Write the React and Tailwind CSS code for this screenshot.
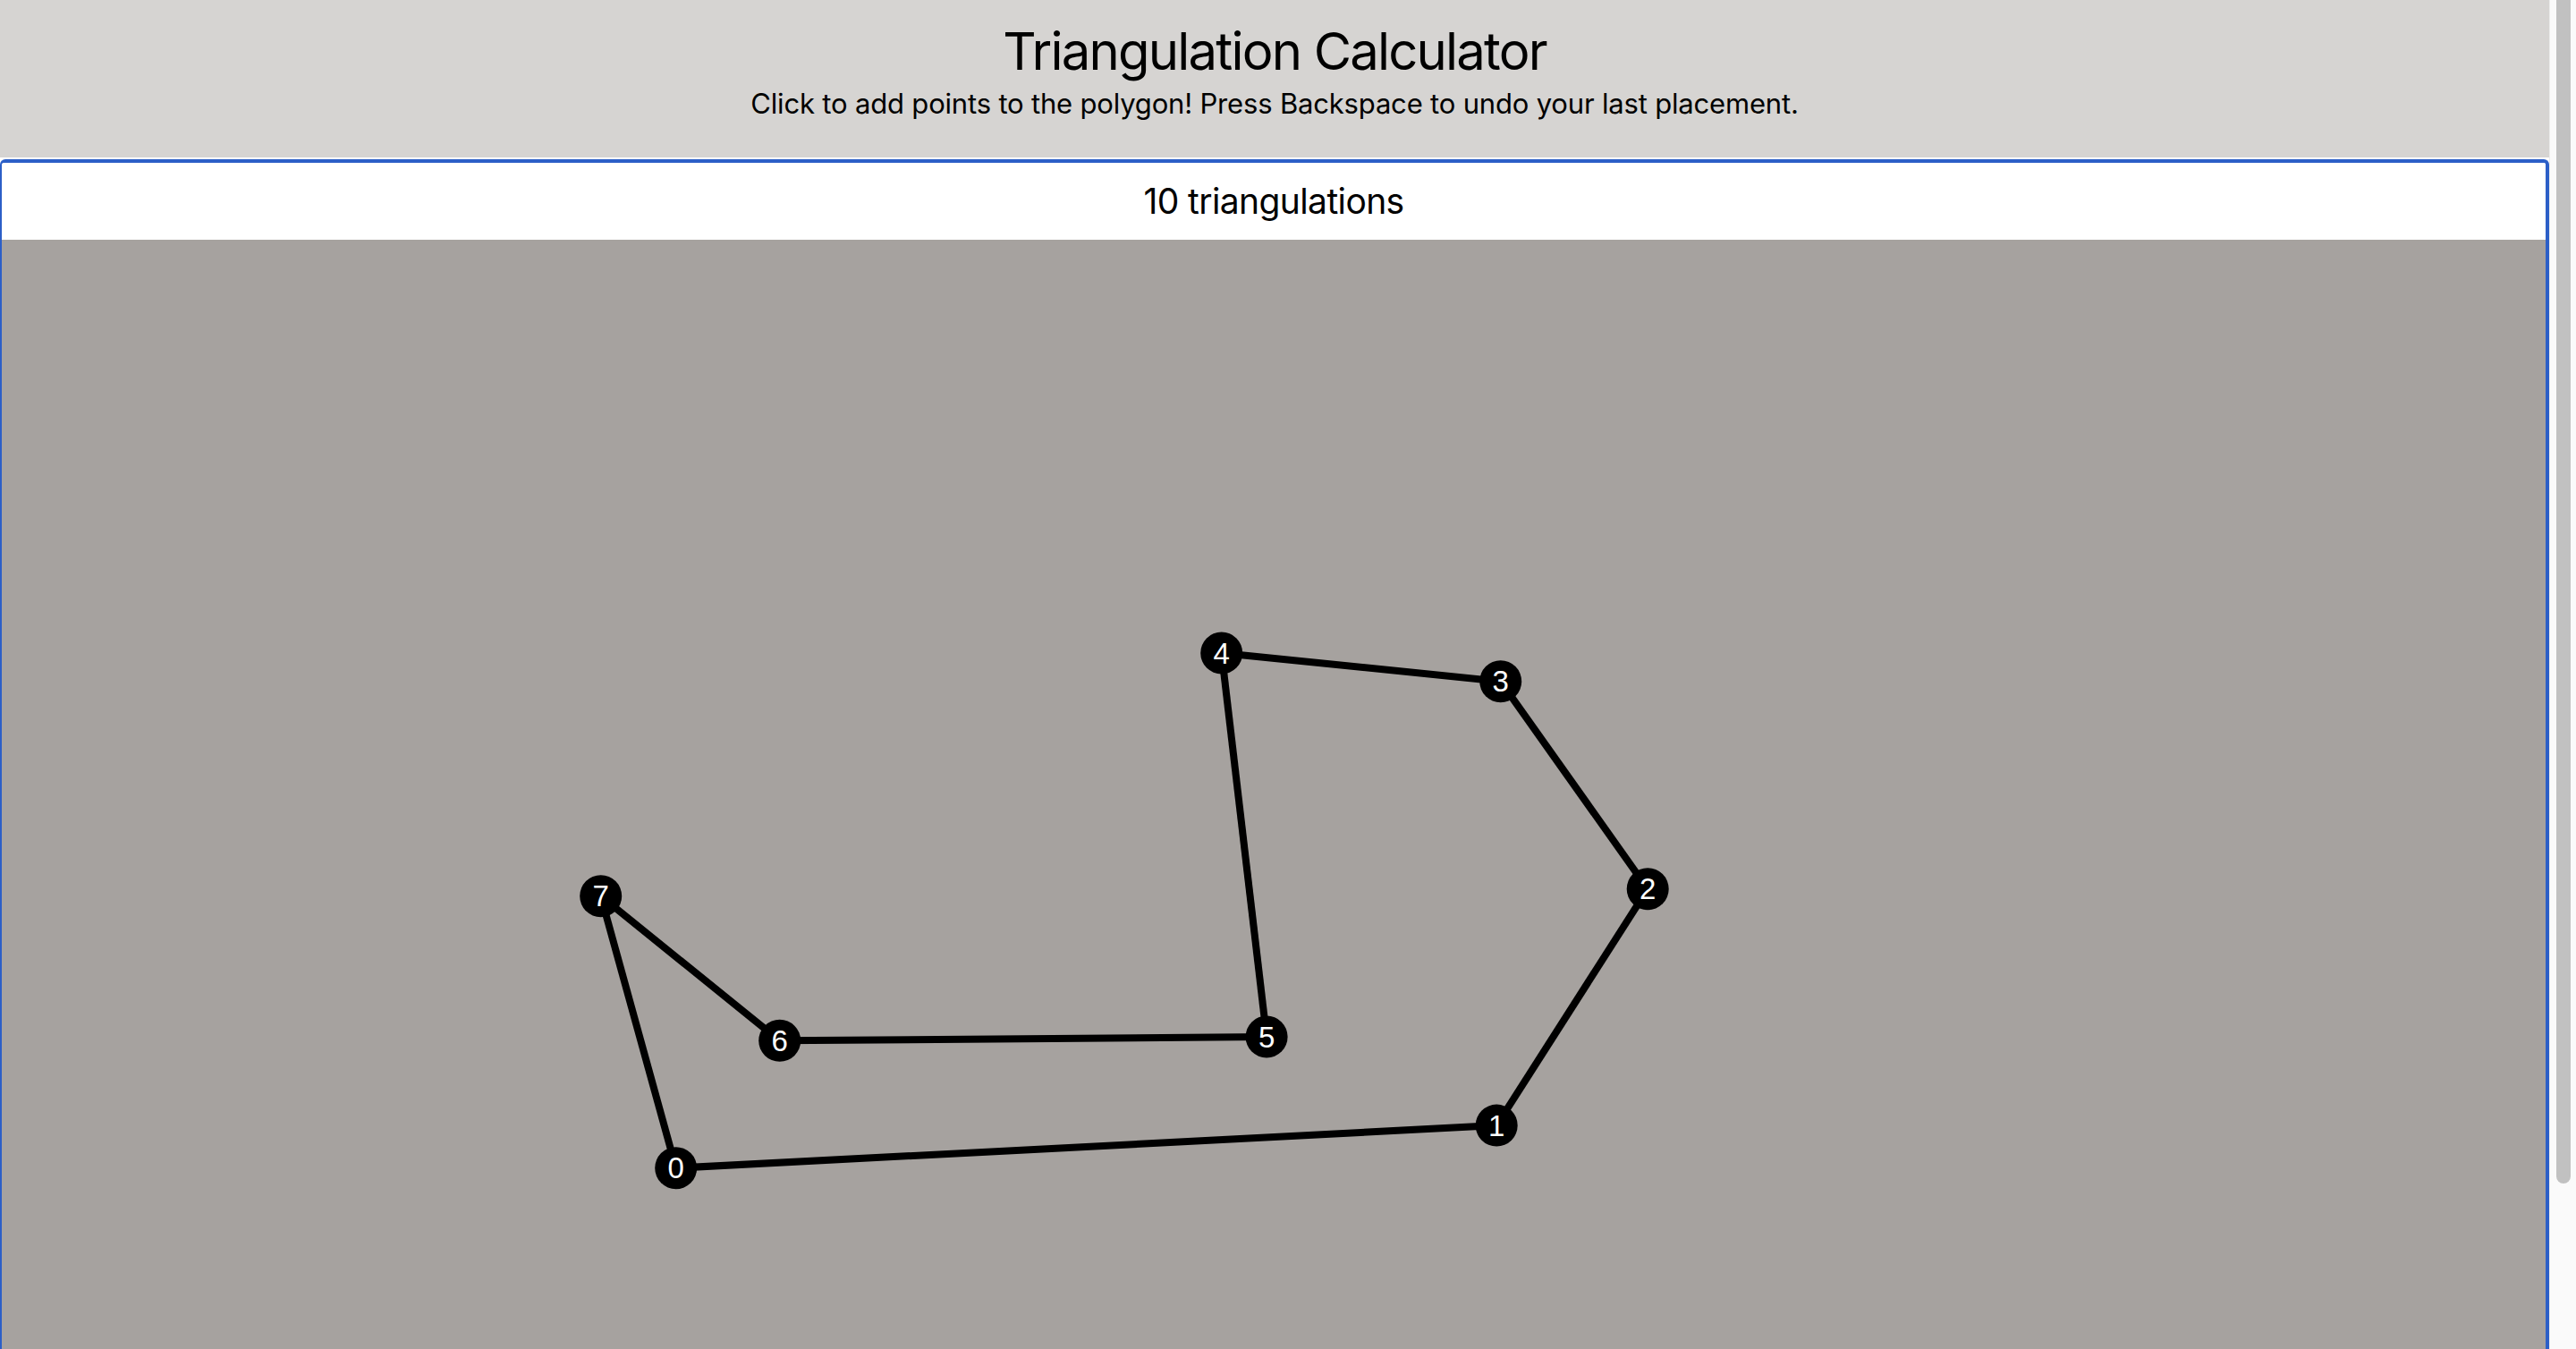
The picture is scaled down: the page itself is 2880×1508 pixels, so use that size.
const points = [
  [755.7, 1305.7],
  [1673.2, 1258.1],
  [1842.2, 993.7],
  [1677.7, 761.7],
  [1365.7, 730],
  [1416.1, 1159],
  [871.7, 1163.3],
  [671.7, 1001.7],
];

// canvas origin on the page
const OX = 2;
const OY = 268;

function Polygon() {
  const pts = points.map(([x, y]) => [x - OX, y - OY]);
  return (
    <svg className="absolute inset-0 h-full w-full">
      {pts.map(([x, y], i) => {
        const [nx, ny] = pts[(i + 1) % pts.length];
        return <line key={'e' + i} x1={x} y1={y} x2={nx} y2={ny} stroke="#000" strokeWidth="8" />;
      })}
      {pts.map(([x, y], i) => (
        <g key={'n' + i}>
          <circle cx={x} cy={y} r="23.5" fill="#000" />
          <text
            x={x}
            y={y + 11.5}
            textAnchor="middle"
            fill="#fff"
            fontSize="33"
            fontFamily="'Liberation Sans', Arial, sans-serif"
          >
            {i}
          </text>
        </g>
      ))}
    </svg>
  );
}

export default function App() {
  return (
    <div className="flex h-screen w-full overflow-hidden bg-white" style={{ fontFamily: 'Inter, "Liberation Sans", sans-serif' }}>
      <div className="flex min-w-0 flex-1 flex-col">
        <header className="flex h-[176px] shrink-0 flex-col items-center bg-[#d6d4d2] pt-[20px] text-black">
          <h1 className="text-[58px] leading-[74px] tracking-[-1.8px]">Triangulation Calculator</h1>
          <p className="mt-[3px] text-[31px] leading-[38px] tracking-[-0.18px]">
            Click to add points to the polygon! Press Backspace to undo your last placement.
          </p>
        </header>
        <div className="h-[2px] shrink-0 bg-white" />
        <div className="flex flex-1 flex-col overflow-hidden rounded-t-[6px] border-l-2 border-r-4 border-t-4 border-[#2c5fc7]">
          <div className="flex h-[86px] shrink-0 items-center justify-center bg-white text-[39px] tracking-[-0.6px] text-black">
            10 triangulations
          </div>
          <div className="relative flex-1 bg-[#a6a29f]">
            <Polygon />
          </div>
        </div>
      </div>
      <div className="w-[30px] shrink-0 border-l border-[#ececec] bg-[#fafafa]">
        <div className="ml-[7px] h-[1323px] w-[16px] rounded-b-full bg-[#c1c1c1]" />
      </div>
    </div>
  );
}
